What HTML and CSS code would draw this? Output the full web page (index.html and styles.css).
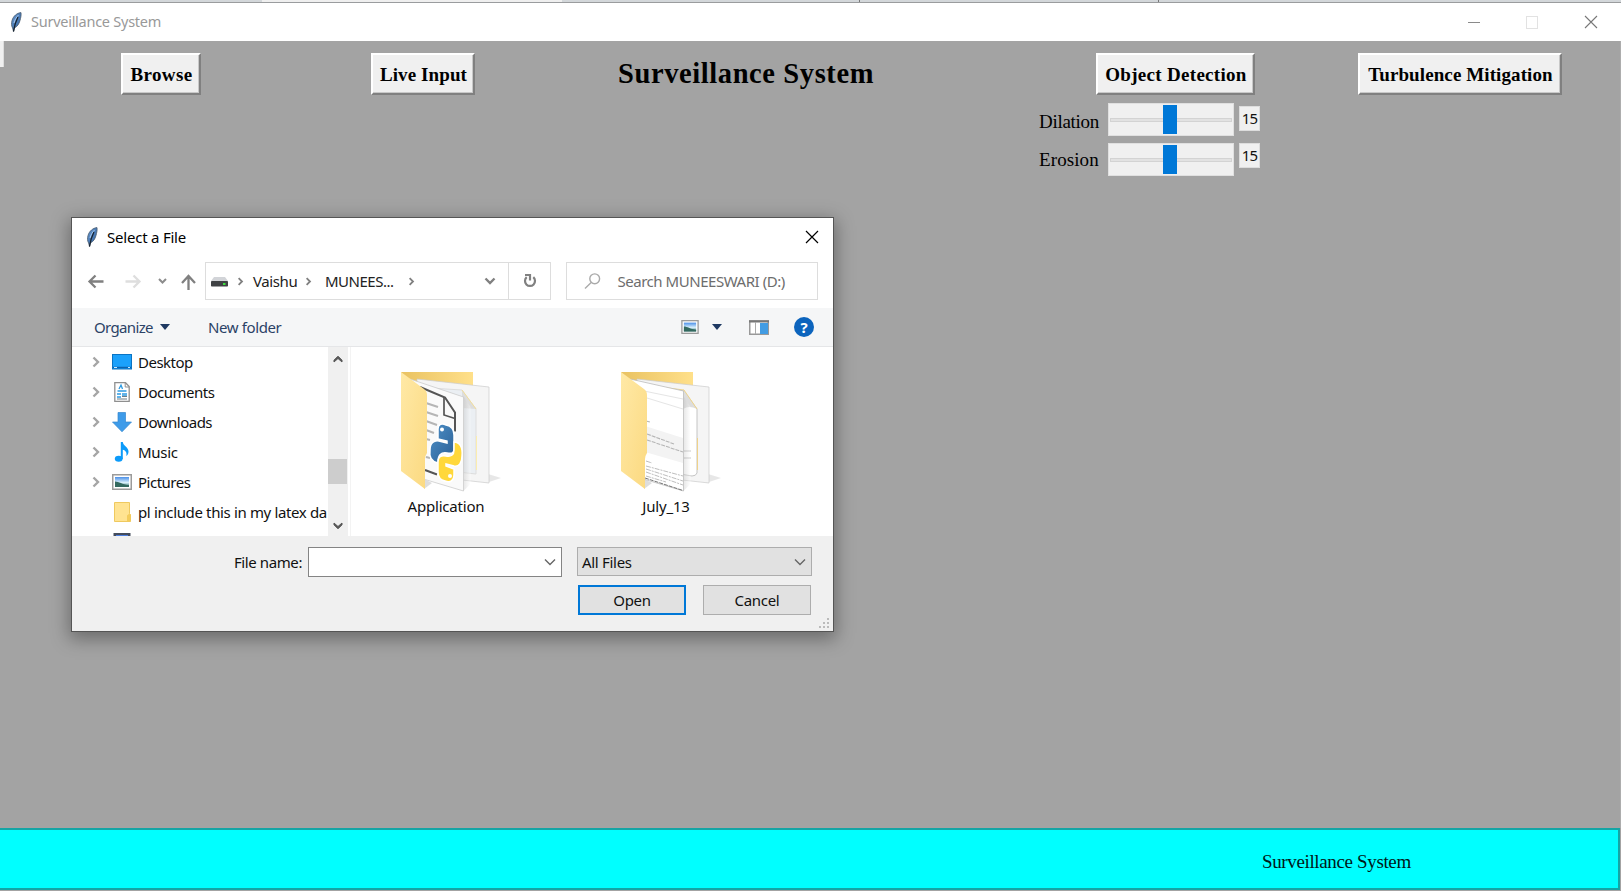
FILE: index.html
```html
<!DOCTYPE html>
<html lang="en">
<head>
<meta charset="utf-8">
<title>Surveillance System</title>
<link rel="stylesheet" href="styles.css">
</head>
<body>
<svg width="0" height="0" class="defs" aria-hidden="true">
  <defs>
    <linearGradient id="gFeather" x1="0" y1="0" x2="1" y2="1"><stop offset="0" stop-color="#6a9ad0"/><stop offset="1" stop-color="#2d5f9e"/></linearGradient>
    <linearGradient id="gFront" x1="0" y1="0" x2="1" y2="1"><stop offset="0" stop-color="#ffe9a6"/><stop offset="1" stop-color="#fbd980"/></linearGradient>
    <linearGradient id="gBack" x1="0" y1="0" x2="1" y2="0"><stop offset="0" stop-color="#e9c262"/><stop offset="1" stop-color="#ffe08a"/></linearGradient>
    <linearGradient id="gSky" x1="0" y1="0" x2="0" y2="1"><stop offset="0" stop-color="#4a8fe8"/><stop offset=".55" stop-color="#d8effb"/><stop offset="1" stop-color="#3c7a78"/></linearGradient>
    <linearGradient id="gBlue" x1="0" y1="0" x2="1" y2="1"><stop offset="0" stop-color="#4d90c8"/><stop offset="1" stop-color="#2b5f95"/></linearGradient>
    <linearGradient id="gShade" x1="0" y1="0" x2="1" y2="0"><stop offset="0" stop-color="#b9b9b9"/><stop offset="1" stop-color="#ffffff"/></linearGradient>
    <symbol id="feather" viewBox="0 0 12 20">
      <path d="M11 .6C7 1 3.300 4 2 8.500c-.8 3-.6 5.500.6 7.500L3.500 19.500l.8-3.500C7.500 14.500 9 12 10 8.500c.7-2.600 1.400-5.500 1-7.900Z" fill="url(#gFeather)" stroke="#4a5a6c" stroke-width=".8"/>
      <path d="M8 5C6.500 8 4.800 11 3.500 19.500" fill="none" stroke="#17222e" stroke-width="1.300"/>
      <path d="M8.500 3C6.500 5 4.500 8 4 11" fill="none" stroke="#a9c9ee" stroke-width="1"/>
    </symbol>
    <symbol id="picture" viewBox="0 0 20 16">
      <rect x=".75" y=".75" width="18.500" height="14.500" fill="#fff" stroke="#9b9b9b" stroke-width="1.500"/>
      <rect x="3" y="3" width="14" height="10" fill="url(#gSky)"/>
      <path d="M3 7.500c4 0 7 3 14 3.500v2H3Z" fill="#33695f"/>
    </symbol>
    <symbol id="chev" viewBox="0 0 8 12"><path d="M1.500 1.500 6 6 1.500 10.500" fill="none" stroke="currentColor" stroke-width="2.400"/></symbol>
    <symbol id="down" viewBox="0 0 12 8"><path d="M1.500 1.500 6 6 10.500 1.500" fill="none" stroke="currentColor" stroke-width="2.400"/></symbol>
  </defs>
</svg>

<div class="backdrop"><i class="tab-a"></i><i class="tab-b"></i><i class="tab-c"></i><i class="tab-d"></i></div>

<header class="titlebar">
  <svg class="app-icon" width="12" height="20"><use href="#feather"/></svg>
  <span class="app-title">Surveillance System</span>
  <svg class="win-controls" width="130" height="14" viewBox="0 0 130 14">
    <path d="M0 7.500H12" stroke="#8a8a8a"/>
    <rect x="58.500" y="1.500" width="11" height="12" fill="none" stroke="#e2e2e2"/>
    <path d="m117 1 12 12m0-12-12 12" stroke="#777" stroke-width="1.100"/>
  </svg>
</header>

<main class="workspace">
  <i class="stub"></i>
  <button class="tk b-browse"><span>Browse</span></button>
  <button class="tk b-live"><span>Live Input</span></button>
  <h1>Surveillance System</h1>
  <section class="detection">
    <button class="tk b-object"><span>Object Detection</span></button>
    <div class="slider-row first"><label>Dilation</label><div class="slider"><i></i><b></b></div><output>15</output></div>
    <div class="slider-row second"><label>Erosion</label><div class="slider"><i></i><b></b></div><output>15</output></div>
  </section>
  <button class="tk b-turb"><span>Turbulence Mitigation</span></button>
</main>
<footer class="status"><span>Surveillance System</span></footer>

<div class="dialog">
  <div class="d-title">
    <svg width="12" height="20"><use href="#feather"/></svg><span>Select a File</span>
    <svg class="d-close" width="14" height="14"><path d="m1 1 12 12m0-12-12 12" stroke="#000" stroke-width="1.200"/></svg>
  </div>
  <div class="d-nav">
    <svg class="arrows" width="110" height="20" viewBox="0 0 110 20" fill="none" stroke-width="2.300">
      <path d="M16.500 10.500H2.500m6-6-6 6 6 6" stroke="#808080"/>
      <path d="M38.500 10.500h14m-6-6 6 6-6 6" stroke="#dedede"/>
      <path d="m72 8 3.500 3.500L79 8" stroke="#8c8c8c" stroke-width="2"/>
      <path d="M101.500 19V5m-6.500 7 6.500-7 6.500 7" stroke="#808080"/>
    </svg>
    <div class="address">
      <svg width="17" height="11"><path d="M3 1h11l3 4H0Z" fill="#d2d4d8"/><rect y="5" width="17" height="5.500" rx=".8" fill="#3f4144"/><rect x="12" y="7" width="2.500" height="2" fill="#3ee03e"/></svg>
      <svg class="c1" width="7" height="9"><use href="#chev"/></svg><span class="vaishu">Vaishu</span>
      <svg class="c2" width="7" height="9"><use href="#chev"/></svg><span class="munees">MUNEES...</span>
      <svg class="c3" width="7" height="9"><use href="#chev"/></svg>
      <svg class="c4" width="12" height="8"><use href="#down"/></svg>
      <div class="refresh"><svg width="14" height="16" viewBox="0 0 14 16" fill="none" stroke="#808080" stroke-width="2.200"><path d="M10.300 4.200A5 5 0 1 1 3.700 4.200M2 2h5v5.500"/></svg></div>
    </div>
    <div class="search">
      <svg width="17" height="16" viewBox="0 0 17 16" fill="none" stroke="#aaa" stroke-width="1.400"><circle cx="10.700" cy="5.800" r="4.900"/><path d="m7.200 9.500-6.200 6"/></svg>
      <span>Search MUNEESWARI (D:)</span>
    </div>
  </div>
  <div class="d-tools">
    <span class="organize">Organize</span><i class="tri t1"></i><span class="newf">New folder</span>
    <svg class="view" width="18" height="14"><use href="#picture"/></svg><i class="tri t2"></i>
    <svg class="pane" width="20" height="15"><rect x=".75" y=".75" width="18.500" height="13.500" fill="#fff" stroke="#999" stroke-width="1.500"/><path d="M0 1.500h20" stroke="#777" stroke-width="2"/><path d="M6.500 2v12" stroke="#aaa"/><rect x="11" y="3" width="8" height="11" fill="#429ce3"/></svg>
    <div class="help">?</div>
  </div>
  <div class="d-body">
    <ul class="tree">
      <li><svg class="exp" width="8" height="12"><use href="#chev"/></svg><svg class="ico" width="20" height="16"><rect x=".5" y=".5" width="19" height="14.500" fill="#1ba1fb" stroke="#0a74c4"/><path d="M1 13.500h18" stroke="#0c63ae" stroke-width="1.500"/><path d="M2 13.500h3m11 0h2" stroke="#cceaff"/></svg><span class="n1">Desktop</span></li>
      <li><svg class="exp" width="8" height="12"><use href="#chev"/></svg><svg class="ico" width="20" height="20"><path d="M2.800.7h10.700L17.200 4.500v14.800H2.800Z" fill="#fff" stroke="#8f8f8f" stroke-width="1.300"/><path d="M13.200 1v4H17" fill="none" stroke="#8f8f8f"/><path d="m7 7 2-4 1.500 4m-5 2h9M5 12h4m-4 3h4m1-3h5m-5 2h5" fill="none" stroke="#2d9be2" stroke-width="1.300"/><path d="M5 17h10M10 14.500h5" stroke="#6e7f88" stroke-width="1.200"/></svg><span class="n2">Documents</span></li>
      <li><svg class="exp" width="8" height="12"><use href="#chev"/></svg><svg class="ico" width="20" height="20"><path d="M6 .5h7.500V10h6L10 19.800.5 10H6Z" fill="#3e9be9" stroke="#3386cf" stroke-width=".7"/></svg><span class="n3">Downloads</span></li>
      <li><svg class="exp" width="8" height="12"><use href="#chev"/></svg><svg class="ico" width="20" height="20"><ellipse cx="6.700" cy="16.800" rx="3.900" ry="3" fill="#0c9bfa"/><path d="M8.800 0h2c.2 4 5.800 5 5.700 9.500 0 2-.8 3.500-2.300 4.500 1-3.500-.5-5.500-3.400-6.300V17h-2Z" fill="#0c9bfa"/></svg><span class="n4">Music</span></li>
      <li><svg class="exp" width="8" height="12"><use href="#chev"/></svg><svg class="ico" width="20" height="16"><use href="#picture"/></svg><span class="n5">Pictures</span></li>
      <li><svg class="exp none" width="8" height="12"></svg><svg class="ico" width="20" height="20"><path d="M2.500.5h15v11l1 1v7h-16Z" fill="#ffe391" stroke="#efc95f"/><path d="M15 19.500v-6l2.500-2 1 1v7Z" fill="#f3cc5c"/></svg><span class="n6">pl include this in my latex da</span></li>
      <li><svg class="exp none" width="8" height="12"></svg><svg class="ico" width="20" height="20"><rect x="1.500" y="1" width="17" height="18" fill="#444c5c"/><rect x="4" y="3" width="12" height="14" fill="#4d7fe0"/></svg></li>
    </ul>
    <div class="scroll s-left"><svg class="up" width="10" height="8"><path d="M1 7V5.200l4-4 4 4V7L5 3.500Z" fill="#555" stroke="#555"/></svg><i></i><svg class="dn" width="10" height="8"><path d="M1 1v1.800l4 4 4-4V1L5 4.500Z" fill="#555" stroke="#555"/></svg></div>
    <div class="files">
      <figure>
        <svg width="104" height="122" viewBox="0 0 104 122">
          <path d="M86 112 101 107 88 103Z" fill="#ddd" opacity=".7"/><path d="M24 118 32 112 24 108Z" fill="#ddd"/>
          <path d="M1 1h72v90H25Z" fill="url(#gBack)"/>
          <path d="m17 8 72 8v96l-72-8Z" fill="#f5f5f5" stroke="#ccc" stroke-width=".7"/>
          <path d="m30 17 32 2 14 19v65l-46-5Z" fill="#ebeff3" stroke="#ddd"/><path d="m62 19 14 19-14-1Z" fill="#ddd"/><path d="M62 19l14 19" stroke="#f3df9b"/><path d="M76.500 65v34" stroke="#fbedaf"/>
          <path d="M63.500 25v95l7-7V36Z" fill="url(#gShade)" opacity=".35"/>
          <path d="m10 8 53.500 18v94L10 104Z" fill="#fafafa" stroke="#ccc" stroke-width=".8"/>
          <path d="m20 16 25 10.500 10 15v19M25 99l12 4.500" fill="none" stroke="#555" stroke-width="2"/><path d="M44 27v17l11 3.500" fill="none" stroke="#555" stroke-width="1.700"/>
          <path d="m26 32 12 4m-12 5 12 4m-12 5 11 4m-11 5 8 3m-8 6 4 1m-4 17 4 1" stroke="#b5b5b5" stroke-width="2"/>
          <path d="M38 58c0-5 4-6 8-4 6 1 8 5 8 10v14c0 4-2 5-7 4-6-1-9 2-9 9v1c-6-1-9-6-8-13 0-7 4-10 9-9l8 2v-2l-9-2Z" fill="url(#gBlue)" stroke="#fff" stroke-width="1.500"/><circle cx="42" cy="58.500" r="2" fill="#fff"/>
          <path d="M54 71c6 0 9 6 8 14 0 7-3 11-8 10l-8-2v2l8 3v6c0 6-4 8-9 6-5-1-7-4-7-9V91c0-5 3-7 8-6 5 1 8-1 8-6Z" fill="#ffd83b" stroke="#fff" stroke-width="1.500"/><circle cx="50" cy="105" r="2" fill="#fff"/>
          <path d="M1 1 24 18q3 2 3 6v58q-2 3-2 6v30L1 100Z" fill="url(#gFront)"/>
        </svg>
        <figcaption class="f1">Application</figcaption>
      </figure>
      <figure>
        <svg width="104" height="122" viewBox="0 0 104 122">
          <path d="M86 112 101 107 88 103Z" fill="#ddd" opacity=".7"/><path d="M24 118 32 112 24 108Z" fill="#ddd"/>
          <path d="M1 1h72v90H25Z" fill="url(#gBack)"/>
          <path d="m17 8 72 8v96l-72-8Z" fill="#f5f5f5" stroke="#ccc" stroke-width=".7"/>
          <path d="m30 17 34 3 13 18v64q-1 3-5 3l-42-7Z" fill="#fff" stroke="#c4c4c4"/><path d="m63 18 14 20q-8-4-14 0Z" fill="#ddd"/><path d="m32 15 32 4 13 19" fill="none" stroke="#f0d58b"/><path d="M77.500 67v32" stroke="#efd28a"/><path d="M64 80h7m-7 7h7" stroke="#bbb"/>
          <path d="M63.500 25v95l7-7V36Z" fill="url(#gShade)" opacity=".35"/>
          <path d="m10 8 53.500 12v100L10 104Z" fill="#fff" stroke="#bbb" stroke-width=".8"/>
          <path d="m25 55 38 12v25L25 81Z" fill="#f3f3f3"/>
          <path d="m24 20 39 8m-36-1 36 11" stroke="#e5e5e5"/>
          <path d="m27 63 27 10m-27-4 36 12M26 50l4 1" stroke="#b5b5b5" stroke-width="1.100" stroke-dasharray="4 1"/>
          <path d="m26 90 6 2m-6 3 37 10m-37-7 37 12m-37-9 37 13m-37-9 20 6" stroke="#b5b5b5" stroke-width=".9" stroke-dasharray="5 1 2 1"/><path d="m25 107 38 12.500" stroke="#777" stroke-dasharray="4 1"/>
          <path d="M1 1 24 18q3 2 3 6v58q-2 3-2 6v30L1 100Z" fill="url(#gFront)"/>
        </svg>
        <figcaption class="f2">July_13</figcaption>
      </figure>
    </div>
    <div class="scroll s-right"><svg class="up" width="10" height="8"><path d="M1 7V5.200l4-4 4 4V7L5 3.500Z" fill="#555" stroke="#555"/></svg><i></i><svg class="dn" width="10" height="8"><path d="M1 1v1.800l4 4 4-4V1L5 4.500Z" fill="#555" stroke="#555"/></svg></div>
  </div>
  <div class="d-foot">
    <div class="foot-row"><label>File name:</label><div class="field"><svg width="12" height="8"><path d="m1 1.500 5 5 5-5" fill="none" stroke="#666" stroke-width="1.400"/></svg></div><div class="select"><span>All Files</span><svg width="12" height="8"><path d="m1 1.500 5 5 5-5" fill="none" stroke="#666" stroke-width="1.400"/></svg></div></div>
    <div class="foot-row actions"><button class="open">Open</button><button class="cancel">Cancel</button></div>
    <svg class="grip" width="11" height="11" fill="#bbb"><path d="M8 0h2v2H8zM4 4h2v2H4zM8 4h2v2H8zM0 8h2v2H0zM4 8h2v2H4zM8 8h2v2H8z"/></svg>
  </div>
</div>
</body>
</html>
```
FILE: styles.css
```css
* { box-sizing: border-box; }
body { margin: 0; width: 1621px; height: 891px; overflow: hidden; background: #a3a3a3; font-family: "Noto Sans", "Open Sans", sans-serif; font-size: 15px; color: #111; display: flex; flex-direction: column; }
svg { display: block; flex: none; }
span, label { white-space: nowrap; }
.defs { position: absolute; }
button { padding: 0; font: inherit; color: inherit; border-radius: 0; }

.backdrop { height: 3px; flex: none; display: flex; border-bottom: 1px solid #9a9c9e; background: #d3d7da; }
.tab-a { width: 262px; }
.tab-b { width: 300px; background: #efefef; }
.tab-c { width: 298px; border-right: 1px solid #777; }
.tab-d { width: 299px; border-right: 1px solid #777; }

.titlebar { height: 38px; flex: none; background: #fff; display: flex; align-items: center; padding: 0 23px 0 10px; }
.app-title { color: #999; margin: 0 0 2px 9px; font-size: 14.5px; letter-spacing: -.26px; }
.win-controls { margin-left: auto; }

.workspace { flex: none; height: 787px; display: flex; align-items: flex-start; border-right: 1px solid #adadad; }
.stub { width: 4px; height: 26px; background: #f0f0f0; border-right: 1px solid #ddd; }
.tk { height: 42px; margin-top: 12px; flex: none; background: #f0f0f0; border: 2px solid; border-color: #fff #808080 #808080 #fff; font: bold 19px "Liberation Serif", serif; letter-spacing: .1px; color: #000; box-shadow: inset -1px -1px #c8c8c8; display: flex; justify-content: center; align-items: center; white-space: nowrap; }
.tk span { margin: 2px 0 0 1px; }
.b-browse { width: 80px; margin-left: 117px; letter-spacing: .35px; }
.b-live { width: 104px; margin-left: 170px; }
h1 { font: bold 28.5px/34px "Liberation Serif", serif; letter-spacing: .6px; margin: 16px 0 0 143px; width: 260px; flex: none; white-space: nowrap; color: #000; }
.detection { width: 222px; margin-left: 161px; flex: none; }
.b-object { width: 159px; margin-left: 57px; letter-spacing: .3px; }
.slider-row { display: flex; align-items: flex-start; height: 33px; }
.slider-row.first { margin-top: 8px; }
.slider-row.second { margin-top: 7px; }
.slider-row label { width: 69px; font: 19px/24px "Liberation Serif", serif; padding-top: 7px; letter-spacing: -.3px; color: #000; }
.slider-row.second label { padding-top: 5px; letter-spacing: .1px; }
.slider { width: 126px; height: 33px; background: #f0f0f0; border: 1px solid #e0e0e0; display: grid; align-items: center; }
.slider i { grid-area: 1/1; height: 4px; margin: 0 1px; background: #e2e2e2; border: 1px solid #d3d3d3; }
.slider b { grid-area: 1/1; width: 14px; height: 29px; margin-left: 54px; background: #0078d7; z-index: 1; }
.slider-row output { width: 21px; height: 25px; margin: 3px 0 0 5px; background: #f0f0f0; text-align: center; font: 15px/22px "Noto Sans", sans-serif; letter-spacing: -.8px; border: 1px solid #ddd; }
.slider-row.second output { margin-top: 0; }
.b-turb { width: 204px; margin-left: 97px; }

.status { flex: none; height: 62px; width: 1620px; background: #0ff; border: 2px solid #14a5a5; border-left: 0; display: flex; align-items: center; padding: 6px 0 0 1262px; font: 19px "Liberation Serif", serif; color: #001818; }
.status span { letter-spacing: -.36px; }

.dialog { position: absolute; left: 71px; top: 217px; width: 763px; height: 415px; border: 1px solid #555; background: #fff; box-shadow: 0 5px 17px 2px rgba(0,0,0,.34); display: flex; flex-direction: column; }
.d-title { height: 38px; display: flex; align-items: center; padding: 0 14px; color: #000; }
.d-title span { margin: 0 0 1px 9px; font-size: 15px; letter-spacing: -.22px; }
.d-close { margin-left: auto; }
.d-nav { height: 52px; display: flex; padding: 6px 15px 8px 15px; align-items: center; }
.arrows { width: 110px; }
.address { margin-left: 8px; width: 347px; height: 38px; border: 1px solid #ddd; display: flex; align-items: center; padding-left: 5px; color: #222; }
.address > svg { color: #808080; }
.c1 { margin-left: 9px; }
.address .vaishu { margin-left: 9px; width: 43px; letter-spacing: -.4px; }
.c2 { margin-left: 9px; }
.munees { margin-left: 13px; width: 72px; letter-spacing: -.5px; }
.c3 { margin-left: 11px; }
.c4 { margin-left: auto; margin-right: 12px; }
.refresh { width: 42px; height: 36px; border-left: 1px solid #ddd; display: grid; place-items: center; }
.search { margin-left: 15px; width: 252px; height: 38px; border: 1px solid #ddd; display: flex; align-items: center; padding-left: 17px; color: #6d6d6d; }
.search span { margin-left: 16px; letter-spacing: -.46px; }
.d-tools { height: 39px; background: #f5f6f7; border-bottom: 1px solid #e5e6e8; display: flex; align-items: center; padding: 0 19px 0 22px; color: #2b4266; }
.organize { width: 60px; letter-spacing: -.65px; }
.tri { border: 5px solid transparent; border-top: 6px solid #1e3962; border-bottom: 0; }
.t1 { margin-left: 6px; }
.newf { margin-left: 38px; letter-spacing: -.38px; }
.view { margin-left: auto; }
.t2 { margin-left: 13px; }
.pane { margin-left: 27px; }
.help { width: 20px; height: 20px; margin-left: 25px; border-radius: 50%; background: #0c64bd; color: #fff; font: bold 15px/20px "Noto Sans", sans-serif; text-align: center; }

.d-body { height: 189px; display: flex; overflow: hidden; }
.tree { width: 256px; height: 189px; margin: 0; padding: 0 0 0 20px; list-style: none; overflow: hidden; flex: none; }
.tree li { height: 30px; display: flex; align-items: center; overflow: hidden; }
.exp { color: #a5a5a5; }
.ico { margin-left: 12px; }
.tree span { margin-left: 6px; letter-spacing: -.5px; }
.tree .n6 { letter-spacing: -.36px; }
.tree .n4 { letter-spacing: -.3px; }
.scroll { background: #f0f0f0; width: 20px; display: flex; flex-direction: column; align-items: center; padding: 8px 0 6px; flex: none; }
.scroll i { width: 19px; background: #cdcdcd; align-self: flex-start; }
.s-left i { height: 25px; margin-top: 96px; }
.s-right i { height: 22px; margin-top: 5px; }
.dn { margin-top: auto; }
.files { flex: 1; margin-left: 2px; border-left: 1px solid #f3f3f3; display: flex; padding-left: 49px; }
figure { margin: 0; width: 220px; padding-top: 24px; flex: none; }
figcaption { width: 92px; text-align: center; margin-top: 2px; line-height: 22px; letter-spacing: -.2px; }

.d-foot { flex: 1; background: #f0f0f0; padding: 11px 21px 0 0; position: relative; }
.foot-row { display: flex; justify-content: flex-end; }
.foot-row label { line-height: 30px; margin-right: 6px; letter-spacing: -.4px; }
.field { width: 254px; height: 30px; background: #fff; border: 1px solid #848484; display: flex; justify-content: flex-end; align-items: center; padding-right: 5px; }
.select { width: 235px; height: 29px; margin-left: 15px; background: #e1e1e1; border: 1px solid #adadad; display: flex; align-items: center; justify-content: space-between; padding: 0 5px 0 4px; }
.select span { letter-spacing: -.3px; }
.actions { margin-top: 8px; padding-right: 1px; gap: 17px; }
.actions button { width: 108px; height: 30px; background: #e1e1e1; border: 1px solid #adadad; letter-spacing: -.3px; }
.actions .open { border: 2px solid #0078d7; }
.grip { position: absolute; right: 3px; bottom: 2px; }
```
